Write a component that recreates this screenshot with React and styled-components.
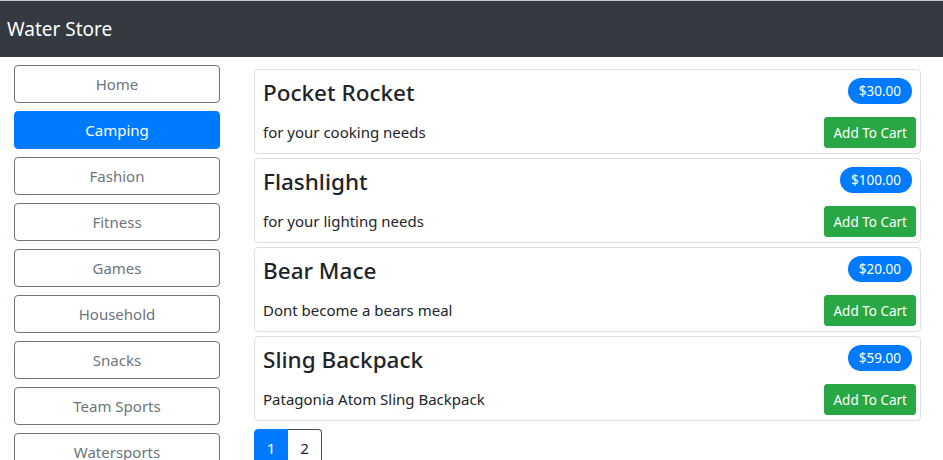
import styled, { createGlobalStyle } from 'styled-components';

const GlobalStyle = createGlobalStyle`
  body {
    margin: 0;
    font-family: "Noto Sans", "Open Sans", sans-serif;
    color: #212529;
    background: #fff;
  }
  * { box-sizing: border-box; }
`;

const categories = [
  'Home',
  'Camping',
  'Fashion',
  'Fitness',
  'Games',
  'Household',
  'Snacks',
  'Team Sports',
  'Watersports',
];

const products = [
  { name: 'Pocket Rocket', desc: 'for your cooking needs', price: '$30.00' },
  { name: 'Flashlight', desc: 'for your lighting needs', price: '$100.00' },
  { name: 'Bear Mace', desc: 'Dont become a bears meal', price: '$20.00' },
  { name: 'Sling Backpack', desc: 'Patagonia Atom Sling Backpack', price: '$59.00' },
];

const Navbar = styled.nav`
  height: 57px;
  border-top: 1px solid #c6c8ca;
  background: #343a40;
  display: flex;
  align-items: center;
  padding-left: 7px;
`;

const Brand = styled.span`
  color: #fff;
  font-size: 19px;
`;

const Layout = styled.div`
  display: flex;
  align-items: flex-start;
`;

const Sidebar = styled.div`
  width: 220px;
  padding: 8px 0 0 14px;
  display: flex;
  flex-direction: column;
  gap: 8px;
`;

const CategoryButton = styled.button`
  height: 38px;
  width: 206px;
  border-radius: 4px;
  font-family: inherit;
  font-size: 15px;
  border: 1px solid ${(p) => (p.$active ? '#007bff' : '#6c757d')};
  background: ${(p) => (p.$active ? '#007bff' : '#fff')};
  color: ${(p) => (p.$active ? '#fff' : '#6c757d')};
`;

const Main = styled.div`
  width: 667px;
  margin-left: 34px;
  padding-top: 12px;
  display: flex;
  flex-direction: column;
  gap: 4px;
`;

const Card = styled.div`
  border: 1px solid #dfdfdf;
  border-radius: 4px;
  padding: 8px 4px 5px 8px;
`;

const Row = styled.div`
  display: flex;
  justify-content: space-between;
  align-items: ${(p) => (p.$top ? 'flex-start' : 'center')};
  margin-bottom: ${(p) => (p.$top ? '10px' : '0')};
`;

const Title = styled.h4`
  margin: 0;
  font-size: 22.5px;
  font-weight: 500;
  line-height: 29px;
`;

const PriceBadge = styled.span`
  height: 26px;
  line-height: 26px;
  padding: 0 11px;
  margin-right: 4px;
  border-radius: 13px;
  background: #007bff;
  color: #fff;
  font-size: 13.5px;
`;

const Desc = styled.p`
  margin: 0 0 2px;
  font-size: 15px;
  line-height: 24px;
`;

const CartButton = styled.button`
  height: 31px;
  padding: 0 8px;
  border: 1px solid #28a745;
  border-radius: 3px;
  background: #28a745;
  color: #fff;
  font-family: inherit;
  font-size: 13.5px;
`;

const Pagination = styled.div`
  display: flex;
  margin-top: 4px;
`;

const PageLink = styled.span`
  width: 34px;
  height: 38px;
  display: flex;
  align-items: center;
  justify-content: center;
  font-size: 15px;
  border: 1px solid ${(p) => (p.$active ? '#007bff' : '#454d55')};
  border-left-width: ${(p) => (p.$active ? '1px' : '0')};
  background: ${(p) => (p.$active ? '#007bff' : '#fff')};
  color: ${(p) => (p.$active ? '#fff' : '#212529')};
  border-radius: ${(p) => (p.$active ? '4px 0 0 4px' : '0 4px 4px 0')};
`;

export default function App() {
  return (
    <>
      <GlobalStyle />
      <Navbar>
        <Brand>Water Store</Brand>
      </Navbar>
      <Layout>
        <Sidebar>
          {categories.map((c) => (
            <CategoryButton key={c} $active={c === 'Camping'}>
              {c}
            </CategoryButton>
          ))}
        </Sidebar>
        <Main>
          {products.map((p) => (
            <Card key={p.name}>
              <Row $top>
                <Title>{p.name}</Title>
                <PriceBadge>{p.price}</PriceBadge>
              </Row>
              <Row>
                <Desc>{p.desc}</Desc>
                <CartButton>Add To Cart</CartButton>
              </Row>
            </Card>
          ))}
          <Pagination>
            <PageLink $active>1</PageLink>
            <PageLink>2</PageLink>
          </Pagination>
        </Main>
      </Layout>
    </>
  );
}
